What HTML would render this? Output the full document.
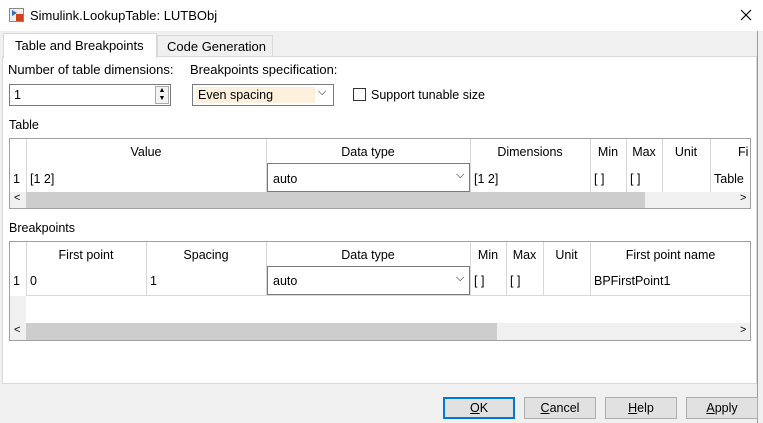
<!DOCTYPE html><html><head><style>
*{box-sizing:border-box;margin:0;padding:0}
body{width:763px;height:423px;background:#f0f0f0;font-family:"Liberation Sans",sans-serif;font-size:12.5px;color:#000;position:relative;overflow:hidden}
.a{position:absolute}
.t{position:absolute;white-space:nowrap}
.c{text-align:center}
.vl{position:absolute;width:1px;background:#d8d8d8}
.btn{position:absolute;top:397px;width:72px;height:22px;background:#e1e1e1;border:1px solid #adadad;text-align:center;line-height:20px}
</style></head><body>
<div class="a" style="left:0;top:0;width:763px;height:31px;background:#fff"></div>
<div class="a" style="left:9px;top:8px;width:15px;height:14px;border:1px solid #888;background:#eee"></div>
<div class="a" style="left:16px;top:14px;width:7px;height:7px;background:#d4401c"></div>
<div class="a" style="left:12px;top:10px;width:0;height:0;border-left:5px solid #2a70c0;border-top:3px solid transparent;border-bottom:3px solid transparent"></div>
<div class="t" style="left:30px;top:8px;font-size:13px">Simulink.LookupTable: LUTBObj</div>
<svg class="a" style="left:740px;top:9px" width="12" height="12"><path d="M1 1L11 11M11 1L1 11" stroke="#000" stroke-width="1.2"/></svg>
<div class="a" style="left:757px;top:31px;width:1px;height:392px;background:#999"></div>
<!-- panel -->
<div class="a" style="left:2px;top:56px;width:755px;height:328px;background:#fff;border:1px solid #d9d9d9"></div>
<div class="a" style="left:157px;top:35px;width:116px;height:22px;background:#f0f0f0;border:1px solid #d9d9d9"></div>
<div class="t" style="left:167px;top:39px;font-size:13px">Code Generation</div>
<div class="a" style="left:3px;top:33px;width:154px;height:25px;background:#fff;border:1px solid #d9d9d9;border-bottom:none"></div>
<div class="t" style="left:15px;top:38px;font-size:13px">Table and Breakpoints</div>
<div class="t" style="left:8px;top:62px;font-size:13px">Number of table dimensions:</div>
<div class="t" style="left:190px;top:62px;font-size:13px">Breakpoints specification:</div>
<div class="a" style="left:9px;top:84px;width:162px;height:22px;border:1px solid #7a7a7a;background:#fff"></div>
<div class="t" style="left:14px;top:88px">1</div>
<div class="a" style="left:155px;top:86px;width:14px;height:18px;border:1px solid #aaa;background:#f3f3f3;font-size:7px;text-align:center;line-height:8px">▲<br>▼</div>
<div class="a" style="left:192px;top:84px;width:142px;height:22px;border:1px solid #7a7a7a;background:#fff"></div>
<div class="a" style="left:196px;top:87px;width:119px;height:16px;background:#fdf0dc"></div>
<div class="t" style="left:198px;top:88px">Even spacing</div>
<div class="t" style="left:318px;top:86px;font-size:11px">⌵</div>
<div class="a" style="left:353px;top:88px;width:13px;height:13px;border:1px solid #333;background:#fff"></div>
<div class="t" style="left:371px;top:88px">Support tunable size</div>
<div class="t" style="left:9px;top:118px">Table</div>
<!-- table 1 -->
<div class="a" style="left:9px;top:138px;width:742px;height:71px;border:1px solid #a0a0a0;background:#fff"></div>
<div class="vl" style="left:26px;top:139px;height:53px"></div>
<div class="vl" style="left:266px;top:139px;height:53px"></div>
<div class="vl" style="left:470px;top:139px;height:53px"></div>
<div class="vl" style="left:590px;top:139px;height:53px"></div>
<div class="vl" style="left:626px;top:139px;height:53px"></div>
<div class="vl" style="left:662px;top:139px;height:53px"></div>
<div class="vl" style="left:710px;top:139px;height:53px"></div>
<div class="t c" style="left:26px;width:240px;top:145px">Value</div>
<div class="t c" style="left:266px;width:204px;top:145px">Data type</div>
<div class="t c" style="left:470px;width:120px;top:145px">Dimensions</div>
<div class="t c" style="left:590px;width:36px;top:145px">Min</div>
<div class="t c" style="left:626px;width:36px;top:145px">Max</div>
<div class="t c" style="left:662px;width:48px;top:145px">Unit</div>
<div class="t" style="left:738px;top:145px">Fi</div>
<div class="t" style="left:13px;top:172px">1</div>
<div class="t" style="left:30px;top:172px">[1 2]</div>
<div class="a" style="left:267px;top:163px;width:203px;height:29px;border:1px solid #7a7a7a;background:#fff"></div>
<div class="t" style="left:273px;top:172px">auto</div>
<div class="t" style="left:456px;top:169px;font-size:11px">⌵</div>
<div class="t" style="left:474px;top:172px">[1 2]</div>
<div class="t" style="left:594px;top:172px">[ ]</div>
<div class="t" style="left:630px;top:172px">[ ]</div>
<div class="t" style="left:714px;top:172px">Table</div>
<div class="a" style="left:10px;top:192px;width:740px;height:16px;background:#f0f0f0"></div>
<div class="a" style="left:26px;top:192px;width:619px;height:16px;background:#cdcdcd"></div>
<div class="t" style="left:14px;top:192px;font-size:11px">&lt;</div>
<div class="t" style="left:740px;top:192px;font-size:11px">&gt;</div>
<div class="t" style="left:9px;top:221px">Breakpoints</div>
<!-- table 2 -->
<div class="a" style="left:9px;top:241px;width:742px;height:100px;border:1px solid #a0a0a0;background:#fff"></div>
<div class="a" style="left:10px;top:242px;width:16px;height:81px;background:#f0f0f0"></div>
<div class="a" style="left:10px;top:242px;width:16px;height:54px;background:#fff"></div>
<div class="a" style="left:26px;top:295px;width:724px;height:1px;background:#d8d8d8"></div>
<div class="vl" style="left:26px;top:242px;height:53px"></div>
<div class="vl" style="left:146px;top:242px;height:53px"></div>
<div class="vl" style="left:266px;top:242px;height:53px"></div>
<div class="vl" style="left:470px;top:242px;height:53px"></div>
<div class="vl" style="left:506px;top:242px;height:53px"></div>
<div class="vl" style="left:543px;top:242px;height:53px"></div>
<div class="vl" style="left:590px;top:242px;height:53px"></div>
<div class="t c" style="left:26px;width:120px;top:248px">First point</div>
<div class="t c" style="left:146px;width:120px;top:248px">Spacing</div>
<div class="t c" style="left:266px;width:204px;top:248px">Data type</div>
<div class="t c" style="left:470px;width:36px;top:248px">Min</div>
<div class="t c" style="left:506px;width:37px;top:248px">Max</div>
<div class="t c" style="left:543px;width:47px;top:248px">Unit</div>
<div class="t c" style="left:590px;width:161px;top:248px">First point name</div>
<div class="t" style="left:13px;top:274px">1</div>
<div class="t" style="left:30px;top:274px">0</div>
<div class="t" style="left:150px;top:274px">1</div>
<div class="a" style="left:267px;top:266px;width:203px;height:29px;border:1px solid #7a7a7a;background:#fff"></div>
<div class="t" style="left:273px;top:274px">auto</div>
<div class="t" style="left:456px;top:272px;font-size:11px">⌵</div>
<div class="t" style="left:474px;top:274px">[ ]</div>
<div class="t" style="left:510px;top:274px">[ ]</div>
<div class="t" style="left:594px;top:274px">BPFirstPoint1</div>
<div class="a" style="left:10px;top:323px;width:740px;height:17px;background:#f0f0f0"></div>
<div class="a" style="left:26px;top:323px;width:471px;height:17px;background:#cdcdcd"></div>
<div class="t" style="left:14px;top:324px;font-size:11px">&lt;</div>
<div class="t" style="left:740px;top:324px;font-size:11px">&gt;</div>
<!-- buttons -->
<div class="btn" style="left:443px;border:2px solid #0078d7;line-height:18px"><u>O</u>K</div>
<div class="btn" style="left:524px"><u>C</u>ancel</div>
<div class="btn" style="left:605px"><u>H</u>elp</div>
<div class="btn" style="left:686px"><u>A</u>pply</div>
</body></html>
